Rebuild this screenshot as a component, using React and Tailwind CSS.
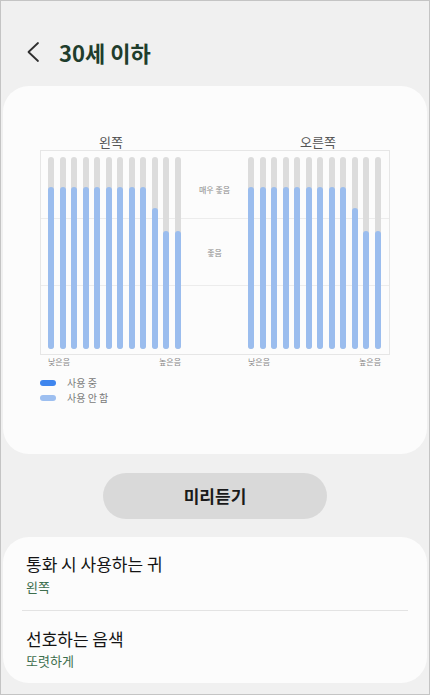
import React from "react";

const offsets = [30, 30, 30, 30, 30, 30, 30, 30, 30, 51, 74, 74];

function BarGroup() {
  return (
    <div className="mt-[6px] flex h-[192px] w-[133px] justify-between">
      {offsets.map((o, i) => (
        <div key={i} className="relative flex h-[192px] w-[6px] flex-col justify-end rounded-full bg-[#dcdcdc]">
          <div className="w-[6px] rounded-full bg-[#9bbdee]" style={{ height: 192 - o }} />
        </div>
      ))}
    </div>
  );
}

export default function App() {
  return (
    <div
      className="h-[695px] w-[430px] overflow-hidden border border-[#c4c4c4] bg-[#f0f0f0]"
      style={{ fontFamily: '"Noto Sans CJK KR", "Noto Sans", sans-serif' }}
    >
      {/* Header */}
      <div className="flex h-[85px] items-center pt-[16px]">
        <svg className="ml-[23px]" width="16" height="24" viewBox="0 0 16 24" fill="none">
          <polyline points="14,3 4.5,12 14,21" stroke="#2f2f2f" strokeWidth="1.8" strokeLinecap="round" strokeLinejoin="round" />
        </svg>
        <div className="ml-[19px] text-[22px] font-bold leading-none text-[#1f3d2c]">30세 이하</div>
      </div>

      {/* Chart card */}
      <div className="mx-[2px] h-[368px] rounded-[26px] bg-[#fcfcfc] pl-[37px] pt-[47px]">
        <div className="flex h-[16px] items-center text-[13px] leading-none text-[#555]">
          <div className="w-[142px] text-center">왼쪽</div>
          <div className="ml-[65px] w-[142px] text-center">오른쪽</div>
        </div>
        <div className="relative mt-[1px] flex h-[205px] w-[350px] border border-[#e6e6e6] pl-[7px]">
          <div className="absolute left-0 right-0 top-[67px] h-px bg-[#ececec]" />
          <div className="absolute left-0 right-0 top-[134px] h-px bg-[#ececec]" />
          <div className="relative flex">
            <BarGroup />
          </div>
          <div className="relative flex w-[67px] flex-col items-center text-[8px] leading-none text-[#8a8a8a]">
            <div className="mt-[35px]">매우 좋음</div>
            <div className="mt-[55px]">좋음</div>
          </div>
          <div className="relative flex">
            <BarGroup />
          </div>
        </div>
        <div className="mt-[2px] flex h-[10px] items-center text-[8px] leading-none text-[#8a8a8a]">
          <div className="ml-[8px] flex w-[133px] justify-between">
            <span>낮은음</span>
            <span>높은음</span>
          </div>
          <div className="ml-[67px] flex w-[133px] justify-between">
            <span>낮은음</span>
            <span>높은음</span>
          </div>
        </div>
        <div className="mt-[10px] flex flex-col gap-[3px] text-[10px] leading-[12px] text-[#7a7a7a]">
          <div className="flex items-center">
            <div className="h-[6px] w-[16px] rounded-full bg-[#3f86ee]" />
            <span className="ml-[11px]">사용 중</span>
          </div>
          <div className="flex items-center">
            <div className="h-[6px] w-[16px] rounded-full bg-[#9dbff0]" />
            <span className="ml-[11px]">사용 안 함</span>
          </div>
        </div>
      </div>

      {/* Preview button */}
      <div className="mt-[19px] flex justify-center">
        <button className="flex h-[46px] w-[224px] items-center justify-center rounded-full bg-[#d9d9d9] text-[17px] font-semibold text-[#1a1a1a]">
          미리듣기
        </button>
      </div>

      {/* Settings card */}
      <div className="mx-[2px] mt-[18px] h-[146px] rounded-[26px] bg-[#fcfcfc]">
        <div className="px-[23px] pb-[14px] pt-[16px]">
          <div className="text-[17px] leading-[22px] text-[#141414]">통화 시 사용하는 귀</div>
          <div className="mt-[3px] text-[13px] leading-[18px] text-[#3d6e4d]">왼쪽</div>
        </div>
        <div className="mx-[19px] h-px bg-[#e3e3e3]" />
        <div className="px-[23px] pt-[17px]">
          <div className="text-[17px] leading-[22px] text-[#141414]">선호하는 음색</div>
          <div className="mt-[2px] text-[13px] leading-[18px] text-[#3d6e4d]">또렷하게</div>
        </div>
      </div>
    </div>
  );
}
